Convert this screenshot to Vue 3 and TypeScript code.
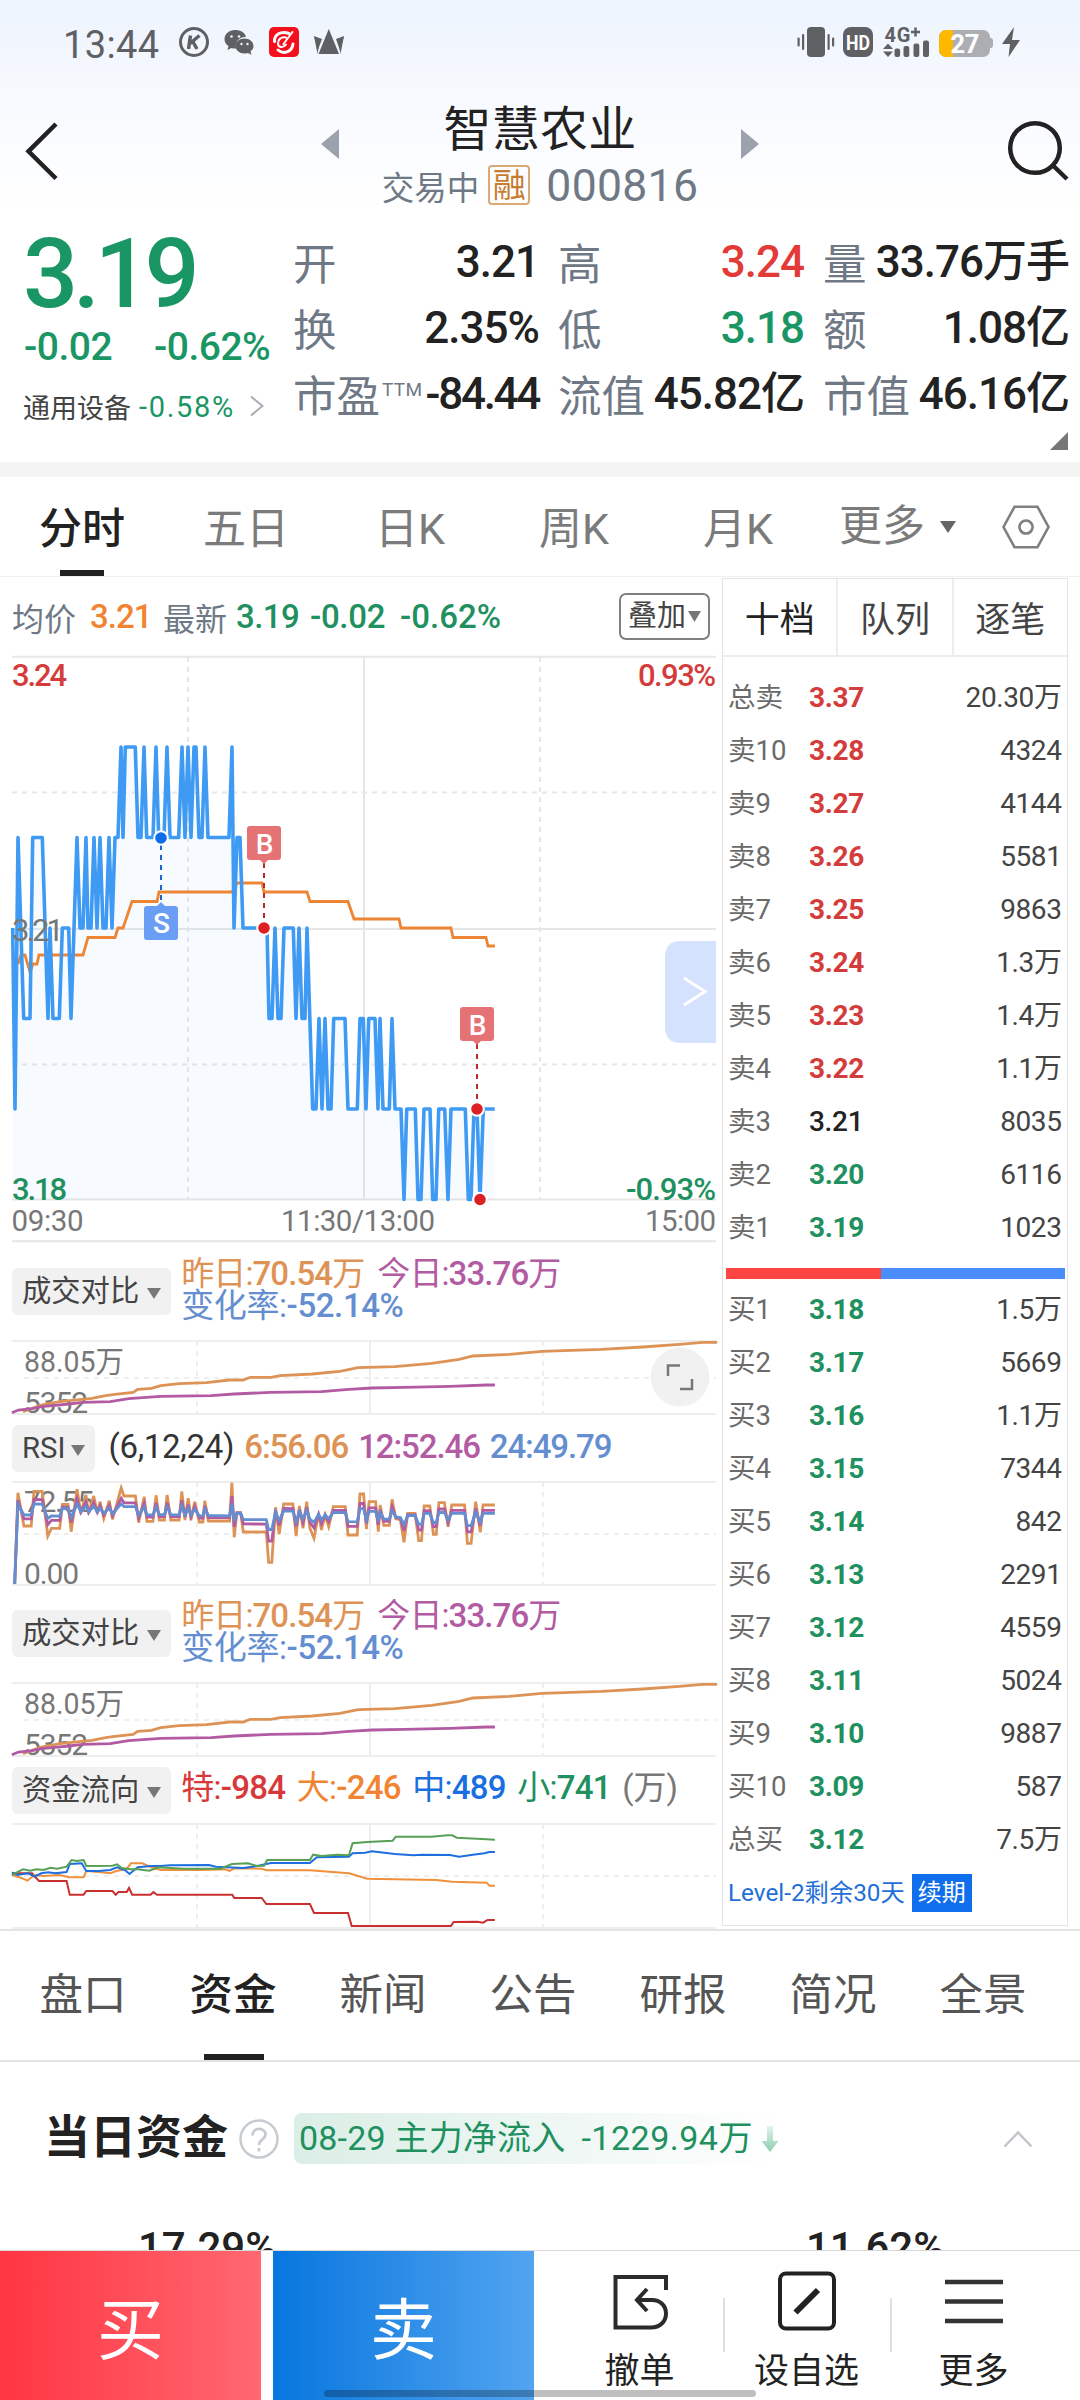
<script setup lang="ts">
type Pt = [number, number]

interface Quote { label: string; sup?: string; value: string; tone?: string }
interface Level { label: string; price: string; volume: string; tone: string }

const quotes: Quote[] = [
  { label: '开', value: '3.21' },
  { label: '高', value: '3.24', tone: 'up' },
  { label: '量', value: '33.76万手' },
  { label: '换', value: '2.35%' },
  { label: '低', value: '3.18', tone: 'down' },
  { label: '额', value: '1.08亿' },
  { label: '市盈', sup: 'TTM', value: '-84.44', tone: 'tight' },
  { label: '流值', value: '45.82亿' },
  { label: '市值', value: '46.16亿' },
]

const periods = ['分时', '五日', '日K', '周K', '月K']
const subTabs = ['盘口', '资金', '新闻', '公告', '研报', '简况', '全景']

const level = (label: string, price: string, volume: string, tone: string): Level => ({ label, price, volume, tone })
const sells: Level[] = [
  level('总卖', '3.37', '20.30万', 'red'),
  level('卖10', '3.28', '4324', 'red'),
  level('卖9', '3.27', '4144', 'red'),
  level('卖8', '3.26', '5581', 'red'),
  level('卖7', '3.25', '9863', 'red'),
  level('卖6', '3.24', '1.3万', 'red'),
  level('卖5', '3.23', '1.4万', 'red'),
  level('卖4', '3.22', '1.1万', 'red'),
  level('卖3', '3.21', '8035', 'flat'),
  level('卖2', '3.20', '6116', 'green'),
  level('卖1', '3.19', '1023', 'green'),
]
const buys: Level[] = [
  level('买1', '3.18', '1.5万', 'green'),
  level('买2', '3.17', '5669', 'green'),
  level('买3', '3.16', '1.1万', 'green'),
  level('买4', '3.15', '7344', 'green'),
  level('买5', '3.14', '842', 'green'),
  level('买6', '3.13', '2291', 'green'),
  level('买7', '3.12', '4559', 'green'),
  level('买8', '3.11', '5024', 'green'),
  level('买9', '3.10', '9887', 'green'),
  level('买10', '3.09', '587', 'green'),
  level('总买', '3.12', '7.5万', 'green'),
]

// Minute prices: [third-pixels from the left, ticks above 3.18]
const prices: Pt[] = [
  [38, 3], [45, 1], [54, 4], [71, 2], [90, 2], [98, 4], [127, 4], [144, 2], [150, 3], [159, 2], [178, 2], [187, 3], [206, 3], [213, 2],
  [231, 4], [240, 3], [249, 3], [258, 4], [264, 3], [273, 3], [282, 4], [291, 3], [300, 4], [309, 3], [318, 3], [327, 4], [336, 3], [345, 4],
  [354, 4], [363, 5], [369, 4], [376, 5], [406, 5], [414, 4], [423, 4], [432, 5], [440, 4], [459, 4], [468, 5], [476, 4], [492, 4], [501, 5],
  [510, 4], [536, 4], [546, 5], [555, 4], [564, 5], [573, 4], [582, 5], [588, 5], [597, 4], [606, 4], [615, 5], [624, 4], [687, 4], [696, 5],
  [702, 3], [711, 4], [720, 4], [729, 3], [801, 3], [807, 2], [816, 2], [825, 3], [834, 2], [843, 2], [852, 3], [880, 3], [888, 2], [897, 3],
  [906, 2], [915, 2], [921, 3], [938, 1], [948, 1], [957, 2], [966, 1], [975, 2], [984, 1], [993, 1], [1001, 2], [1035, 2], [1044, 1],
  [1072, 1], [1080, 2], [1090, 2], [1098, 1], [1106, 2], [1125, 2], [1134, 1], [1140, 2], [1149, 1], [1168, 1], [1176, 2], [1185, 1],
  [1203, 1], [1212, 0], [1220, 1], [1246, 1], [1254, 0], [1263, 0], [1272, 1], [1290, 1], [1298, 0], [1308, 0], [1316, 1], [1334, 1],
  [1344, 0], [1353, 1], [1396, 1], [1405, 0], [1413, 0], [1422, 1], [1431, 1], [1440, 0], [1450, 1], [1484, 1],
]
const pricePts = prices.map(([x, t]) => `${(x / 3).toFixed(1)},${(1199.5 - t * 90.5).toFixed(1)}`).join(' ')
const priceArea = `12.7,1199.5 ${pricePts} 494.7,1199.5`

const average =
  '18,964 21,955 25,955 30,972 33,964 37,964 39,955 83,955 88,937.5 115,937.5 118,928 123,928 132,901.5 157,901.5 159,892 232,892 237,883 262,883 264,892 307,892 310,901.5 348,901.5 354,919 399,919 401,928 451,928 453,937.5 486,937.5 488,946 495,946'

// Series of the lower panels share one horizontal scale.
const sx = 2.178
const line = (pts: Pt[], base: number) => pts.map(([x, y]) => `${(x / sx).toFixed(1)},${(base + y / 3).toFixed(1)}`).join(' ')

const yesterday = line([
  [50, 545], [60, 540], [90, 525], [130, 515], [200, 505], [230, 497], [250, 493], [290, 487], [300, 478], [330, 475], [350, 467], [390, 461],
  [450, 458], [500, 450], [530, 450], [545, 442], [590, 442], [610, 437], [680, 432], [740, 424], [780, 413], [860, 410], [940, 400],
  [1000, 388], [1030, 378], [1110, 373], [1180, 364], [1310, 358], [1400, 351], [1480, 343], [1530, 337], [1562, 337],
], 1230)
const today = line([
  [26, 548], [40, 540], [70, 536], [90, 530], [120, 526], [150, 522], [180, 517], [240, 515], [280, 506], [350, 499], [460, 497], [510, 492],
  [590, 487], [700, 485], [760, 478], [810, 474], [880, 472], [980, 469], [1060, 465], [1078, 465],
], 1230)

const rsi: Pt[] = [
  [32, 1062], [39, 788], [52, 888], [68, 888], [74, 784], [92, 784], [104, 918], [112, 895], [130, 895], [136, 823], [148, 823], [155, 905],
  [168, 778], [176, 850], [187, 795], [193, 850], [204, 798], [212, 850], [218, 815], [226, 865], [238, 812], [245, 868], [264, 774],
  [270, 798], [295, 798], [302, 878], [314, 800], [320, 874], [333, 874], [340, 796], [347, 870], [358, 870], [364, 795], [372, 870],
  [390, 870], [396, 784], [403, 870], [410, 805], [416, 870], [424, 815], [434, 876], [442, 876], [446, 812], [454, 873], [500, 873],
  [505, 758], [510, 922], [516, 848], [524, 848], [530, 906], [580, 906], [585, 997], [592, 997], [600, 832], [608, 912], [618, 822],
  [638, 822], [645, 918], [652, 828], [660, 895], [668, 815], [675, 895], [684, 925], [694, 850], [700, 900], [708, 855], [716, 890],
  [726, 830], [752, 830], [758, 915], [778, 915], [784, 792], [792, 792], [798, 897], [804, 815], [818, 815], [824, 905], [828, 825],
  [836, 886], [848, 886], [854, 808], [862, 866], [872, 870], [880, 937], [888, 850], [904, 850], [912, 932], [918, 932], [924, 828],
  [936, 828], [944, 913], [950, 913], [956, 818], [968, 818], [976, 890], [984, 825], [1012, 825], [1018, 940], [1026, 940], [1036, 815],
  [1046, 907], [1052, 825], [1078, 825],
]
const smooth = (k: number): Pt[] =>
  rsi.map(([x, y]): Pt => {
    if (y > 1050) return [x, y]
    const mean = 838 + Math.min(x / 1000, 1) * 24
    return [x, mean + (y - mean) * k]
  })
const rsi6 = line(rsi, 1230)
const rsi12 = line(smooth(0.56), 1230)
const rsi24 = line(smooth(0.32), 1230)

const flows = [
  { color: '#c9302f', pts: line([[26, 880], [70, 880], [76, 890], [85, 903], [145, 903], [152, 944], [182, 944], [188, 933], [245, 933], [252, 944], [258, 936], [276, 936], [281, 924], [288, 944], [328, 944], [334, 936], [342, 944], [506, 944], [510, 954], [570, 954], [580, 972], [675, 972], [684, 999], [758, 999], [766, 1038], [982, 1038], [988, 1026], [1040, 1025], [1052, 1028], [1062, 1020], [1078, 1020]], 1580) },
  { color: '#f0903c', pts: line([[26, 885], [45, 893], [60, 902], [75, 885], [95, 888], [130, 885], [150, 892], [182, 892], [188, 873], [215, 876], [240, 880], [255, 872], [275, 868], [285, 850], [310, 850], [330, 862], [350, 870], [440, 870], [490, 868], [500, 873], [510, 865], [570, 866], [580, 871], [675, 871], [760, 880], [800, 896], [860, 898], [950, 900], [985, 905], [1060, 908], [1066, 917], [1078, 917]], 1580) },
  { color: '#1d6fe0', pts: line([[26, 877], [38, 885], [50, 882], [62, 880], [75, 890], [90, 880], [105, 877], [120, 880], [145, 876], [152, 852], [178, 850], [188, 873], [215, 873], [240, 870], [255, 862], [272, 870], [282, 882], [300, 862], [330, 858], [350, 858], [370, 856], [455, 855], [470, 860], [530, 864], [560, 858], [590, 849], [675, 849], [690, 832], [760, 830], [768, 820], [795, 818], [810, 814], [860, 822], [900, 826], [920, 824], [980, 825], [1000, 830], [1030, 824], [1055, 820], [1066, 816], [1078, 816]], 1580) },
  { color: '#57a055', pts: line([[26, 885], [40, 875], [50, 868], [66, 872], [80, 868], [95, 870], [110, 863], [125, 866], [145, 860], [156, 840], [168, 843], [182, 840], [188, 858], [245, 857], [255, 853], [265, 864], [285, 868], [300, 868], [325, 872], [345, 862], [400, 866], [480, 866], [505, 852], [540, 850], [560, 858], [575, 857], [582, 840], [675, 840], [682, 824], [700, 828], [735, 824], [760, 826], [768, 790], [800, 786], [855, 782], [862, 770], [940, 770], [975, 766], [985, 766], [995, 773], [1050, 777], [1078, 779]], 1580) },
]
</script>

<template>
  <div class="screen">
    <header class="top">
      <svg class="status" width="1080" height="84" viewBox="0 0 1080 84">
        <text x="63" y="57.5" font-size="38" fill="#5f6063" textLength="96">13:44</text>
        <g fill="none" stroke="#5f6063" stroke-width="3">
          <circle cx="194" cy="42" r="13.5" />
          <path d="M190.500 35.500L188.500 49M199.500 35.500L190 43.500M192.800 41.500L197 49" stroke-width="3.500" />
        </g>
        <g fill="#5f6063">
          <path d="M235 30c-6 0-10.500 4-10.500 9 0 3 1.500 5.500 4 7l-1 4 4-2c1.500.5 3 .6 4.500.5-1.500-7 4-12 10-11.500-1-4.500-5.500-7-11-7z" />
          <path d="M244.500 38.500c-5 0-9 3.400-9 7.500s4 7.500 9 7.500c1.200 0 2.300-.1 3.300-.5l3.700 1.800-1-3.300c1.800-1.400 3-3.300 3-5.500 0-4.100-4-7.500-9-7.500z" />
          <path d="M328.800 29L339 54h-20.500zM314 36l8 3-4.200 11.500zM344 36l-8 3 4 11.500z" />
          <path d="M314 36l3.500 18 1.500-9zM344 36l-3.500 18-1.500-9z" />
        </g>
        <g fill="#f1f5fc"><circle cx="231.500" cy="36.500" r="1.300" /><circle cx="239" cy="36.500" r="1.300" /><circle cx="241.500" cy="44" r="1.200" /><circle cx="247.500" cy="44" r="1.200" /></g>
        <rect x="269" y="27" width="30" height="30" rx="5" fill="#f40f1c" />
        <g fill="none" stroke="#fff" stroke-linecap="round">
          <path d="M289 33.500c-8-3-15 1-14.500 8M278 50c5 4.500 14 2.500 15-6" stroke-width="3" />
          <path d="M286 37.500c-5-1-8 2-8 6s5 5 8 1M292.500 32l-9 12" stroke-width="2" />
        </g>
        <g fill="#5f6063">
          <rect x="807" y="27" width="18" height="30" rx="4" />
          <rect x="802" y="34" width="2.200" height="16" rx="1" /><rect x="797.500" y="37.500" width="2.200" height="9" rx="1" />
          <rect x="827.500" y="34" width="2.200" height="16" rx="1" /><rect x="832" y="37.500" width="2.200" height="9" rx="1" />
          <rect x="843" y="27" width="30" height="30" rx="8" />
          <text x="884.500" y="42" font-size="20" font-weight="700" textLength="26">4G</text>
          <path d="M911 32h9M915.500 27.500v9" stroke="#5f6063" stroke-width="2.500" />
          <path d="M888 43.500l5 5.500h-10zM888 57l5-5.500h-10z" />
          <rect x="894.500" y="48.500" width="5.600" height="8.500" rx="2" /><rect x="903.500" y="46" width="5.800" height="11" rx="2" />
          <rect x="913.500" y="43.500" width="5.800" height="13.500" rx="2" /><rect x="923" y="40.500" width="6" height="16.500" rx="2" />
          <path d="M1014 27l-12 17h8l-1.500 13L1020 40h-8z" />
        </g>
        <text x="846" y="49.500" font-size="20" font-weight="700" fill="#fff" textLength="24" lengthAdjust="spacingAndGlyphs">HD</text>
        <path d="M988 38h2.500q2.500 0 2.500 3v4q0 3-2.500 3H988z" fill="#acaeb3" />
        <rect x="939" y="30" width="51" height="27" rx="7" fill="#acaeb3" />
        <path d="M953 30h-7a7 7 0 0 0-7 7v13a7 7 0 0 0 7 7h7z" fill="#ffb800" />
        <text x="950.500" y="53" font-size="25.500" font-weight="700" fill="#fff" textLength="29">27</text>
      </svg>

      <div class="titlebar">
        <svg width="321" height="138" viewBox="0 84 321 138"><path d="M56 124L28.500 151.300L56 178.500" fill="none" stroke="#222" stroke-width="4.500" /></svg>
        <svg width="18" height="138" viewBox="321 84 18 138"><path d="M339 129v30l-18-15z" fill="#9aa3ad" /></svg>
        <div class="title">
          <h1>智慧农业</h1>
          <div class="subtitle"><span>交易中</span><b>融</b><i>000816</i></div>
        </div>
        <svg width="18" height="138" viewBox="741 84 18 138"><path d="M741 129v30l18-15z" fill="#9aa3ad" /></svg>
        <svg width="321" height="138" viewBox="759 84 321 138">
          <circle cx="1035" cy="148" r="24.800" fill="none" stroke="#222" stroke-width="4.500" /><path d="M1053 165.500L1067 179" stroke="#222" stroke-width="4.500" />
        </svg>
      </div>
    </header>

    <section class="quote">
      <div class="last">
        <div class="price">3.19</div>
        <div class="change"><span>-0.02</span><span>-0.62%</span></div>
        <div class="sector">
          <span>通用设备</span><em>-0.58%</em>
          <svg width="14" height="22" viewBox="0 0 14 22"><path d="M1 1.500L12.500 11L1 20.500" fill="none" stroke="#a7adb4" stroke-width="2" /></svg>
        </div>
      </div>
      <div class="grid">
        <div v-for="q in quotes" :key="q.label" class="cell">
          <span class="label">{{ q.label }}<sup v-if="q.sup">{{ q.sup }}</sup></span>
          <span class="value" :class="q.tone">{{ q.value }}</span>
        </div>
      </div>
      <svg class="fold" width="18" height="18"><path d="M18 0v18H0z" fill="#777" /></svg>
    </section>

    <nav class="periods">
      <span v-for="(p, i) in periods" :key="p" :class="{ active: i === 0 }">{{ p }}</span>
      <span class="more">更多<svg width="16" height="12"><path d="M0 0h16l-8 12z" fill="#666" /></svg></span>
      <svg width="48" height="44" viewBox="0 0 48 44"><path d="M12.500 1.800h23L46.500 22l-11 20.200h-23L1.500 22z M24 15.500a6.500 6.500 0 1 0 .01 0z" fill="none" stroke="#808080" stroke-width="2.600" /></svg>
    </nav>

    <main class="main">
      <div class="charts">
        <div class="info">
          <span class="grey">均价</span><span class="avg">3.21</span><span class="grey now">最新</span>
          <span class="fall a">3.19</span><span class="fall b">-0.02</span><span class="fall c">-0.62%</span>
          <button class="overlay">叠加<svg width="13" height="11"><path d="M0 0h13l-6.500 11z" fill="#777" /></svg></button>
        </div>

        <svg width="722" height="586" viewBox="0 656 722 586" class="plot">
          <g stroke="#e6e7e5" stroke-width="2" fill="none">
            <path d="M12 656.800H716M12 929H716M12 1199.500H716M364 657V1199" />
            <path d="M12 792.500H716M12 1064.500H716M188 657V1199M540 657V1199" stroke-dasharray="5 5" />
          </g>
          <polygon :points="priceArea" fill="#3d97f5" fill-opacity="0.045" />
          <polyline :points="average" fill="none" stroke="#ed8535" stroke-width="2.800" />
          <polyline :points="pricePts" fill="none" stroke="#3f9af4" stroke-width="3.600" stroke-linejoin="round" />
          <g font-size="31" font-weight="500">
            <text x="12" y="685.500" fill="#d43c3c" textLength="55">3.24</text>
            <text x="12" y="941" fill="#777" font-weight="400" textLength="52">3.21</text>
            <text x="12" y="1200" fill="#21905f" textLength="55">3.18</text>
            <text x="638" y="685.500" fill="#d43c3c" textLength="78">0.93%</text>
            <text x="626" y="1200" fill="#21905f" textLength="90">-0.93%</text>
          </g>
          <g font-size="29.500" fill="#777">
            <text x="11.500" y="1231" textLength="72">09:30</text><text x="281" y="1231" textLength="154">11:30/13:00</text><text x="645" y="1231" textLength="71">15:00</text>
          </g>
          <g stroke-width="2" stroke-dasharray="5 5"><path d="M161 845V905" stroke="#1a66cc" /><path d="M264 863V922M477 1044V1103" stroke="#b5282c" /></g>
          <g stroke="#fff" stroke-width="2">
            <circle cx="161" cy="838" r="6.800" fill="#0f6eec" /><circle cx="264" cy="928" r="6.800" fill="#dd2024" />
            <circle cx="477" cy="1109" r="6.800" fill="#dd2024" /><circle cx="480" cy="1199.500" r="6.800" fill="#dd2024" />
          </g>
          <path d="M147 906h10l4-4l4 4h10q3 0 3 3v28q0 3-3 3h-28q-3 0-3-3v-28q0-3 3-3z" fill="#6a9ef5" />
          <path d="M250 826h28q3 0 3 3v28q0 3-3 3h-10l-4 4l-4-4h-10q-3 0-3-3v-28q0-3 3-3z" fill="#e57376" />
          <path d="M463 1007h28q3 0 3 3v28q0 3-3 3h-10l-4 4l-4-4h-10q-3 0-3-3v-28q0-3 3-3z" fill="#e57376" />
          <g font-size="28" font-weight="500" fill="#fff" text-anchor="middle"><text x="161.500" y="933">S</text><text x="264.500" y="853.500">B</text><text x="477.500" y="1034.500">B</text></g>
          <path d="M716 941h-35q-16 0-16 16v70q0 16 16 16h35z" fill="#d4e2fe" />
          <path d="M684 978L705 991.500L684 1005" fill="none" stroke="#fff" stroke-width="3" />
          <path d="M12 1241.300H716" stroke="#e6e6e6" stroke-width="2" />
        </svg>

        <template v-for="n in 2" :key="n">
          <div class="legend volume" :class="{ second: n === 2 }">
            <button>成交对比<svg width="14" height="11"><path d="M0 0h14l-7 11z" fill="#777" /></svg></button>
            <div class="two">
              <div><span class="o">昨日:<b>70.54</b>万</span><span class="p">今日:<b>33.76</b>万</span></div>
              <div><span class="bl">变化率:<b>-52.14%</b></span></div>
            </div>
          </div>
          <svg width="722" height="76" viewBox="0 1340 722 76" class="plot">
            <g stroke="#eeeeee" stroke-width="2" fill="none"><path d="M12 1341H716M12 1414H716M370 1341V1414" /><path d="M24 1378H716M197 1341V1414M543 1341V1414" stroke-dasharray="5 5" /></g>
            <g font-size="30" fill="#777"><text x="24" y="1371.500" textLength="100" lengthAdjust="spacingAndGlyphs">88.05万</text><text x="24" y="1412.500" textLength="64">5352</text></g>
            <polyline :points="yesterday" fill="none" stroke="#dd9356" stroke-width="2.800" />
            <polyline :points="today" fill="none" stroke="#b35ba2" stroke-width="2.800" />
            <template v-if="n === 1">
              <circle cx="680" cy="1377" r="29.500" fill="#f0f0f0" fill-opacity="0.900" />
              <path d="M668 1376V1365.500H680M692 1379V1389H680" fill="none" stroke="#777" stroke-width="2.500" />
            </template>
          </svg>
          <template v-if="n === 1">
            <div class="legend rsi">
              <button>RSI<svg width="14" height="11"><path d="M0 0h14l-7 11z" fill="#777" /></svg></button>
              <span class="k">(6,12,24)</span><span class="o">6:56.06</span><span class="p">12:52.46</span><span class="bl">24:49.79</span>
            </div>
            <svg width="722" height="106" viewBox="0 1481 722 106" class="plot">
              <g stroke="#eeeeee" stroke-width="2" fill="none"><path d="M12 1482H716M12 1585H716M370 1482V1585" /><path d="M24 1534H716M197 1482V1585M543 1482V1585" stroke-dasharray="5 5" /></g>
              <g font-size="30" fill="#777"><text x="24" y="1512" textLength="70">72.55</text><text x="24" y="1583.500" textLength="55">0.00</text></g>
              <g fill="none" stroke-width="2.800"><polyline :points="rsi6" stroke="#dd9356" /><polyline :points="rsi12" stroke="#b35ba2" /><polyline :points="rsi24" stroke="#648ed0" /></g>
            </svg>
          </template>
        </template>

        <div class="legend flow">
          <button>资金流向<svg width="14" height="11"><path d="M0 0h14l-7 11z" fill="#777" /></svg></button>
          <span class="r">特:<b>-984</b></span><span class="or">大:<b>-246</b></span><span class="b2">中:<b>489</b></span><span class="g">小:<b>741</b></span><span class="u">(万)</span>
        </div>
        <svg width="722" height="106" viewBox="0 1823 722 106" class="plot">
          <g stroke="#eeeeee" stroke-width="2" fill="none"><path d="M12 1824H716M12 1928H716M370 1824V1928" /><path d="M24 1876H716M197 1824V1928M543 1824V1928" stroke-dasharray="5 5" /></g>
          <polyline v-for="f in flows" :key="f.color" :points="f.pts" fill="none" :stroke="f.color" stroke-width="2" />
        </svg>
      </div>

      <aside class="book">
        <div class="booktabs"><span class="on">十档</span><span>队列</span><span>逐笔</span></div>
        <div class="levels">
          <div v-for="l in sells" :key="l.label" class="level"><span>{{ l.label }}</span><b :class="l.tone">{{ l.price }}</b><i>{{ l.volume }}</i></div>
        </div>
        <div class="ratio"><span></span></div>
        <div class="levels">
          <div v-for="l in buys" :key="l.label" class="level"><span>{{ l.label }}</span><b :class="l.tone">{{ l.price }}</b><i>{{ l.volume }}</i></div>
        </div>
        <div class="renew"><span>Level-2剩余30天</span><button>续期</button></div>
      </aside>
    </main>

    <nav class="subtabs"><span v-for="(t, i) in subTabs" :key="t" :class="{ active: i === 1 }">{{ t }}</span></nav>

    <section class="funds">
      <div class="fundhead">
        <h2>当日资金</h2>
        <svg width="40" height="40" viewBox="0 0 40 40"><circle cx="20" cy="20" r="18.500" fill="none" stroke="#c6cbd1" stroke-width="2.500" /><path d="M13.500 16.500c0-9 13-8.500 13-1 0 5-6.500 5-6.500 10.500M20 29v3.500" fill="none" stroke="#c6cbd1" stroke-width="2.800" /></svg>
        <div class="pill"><span>08-29 主力净流入</span><span class="net">-1229.94万</span>
          <svg width="18" height="28" viewBox="0 0 18 28"><defs><linearGradient id="dn" x1="0" y1="0" x2="0" y2="1"><stop offset="0" stop-color="#e3f3ec" /><stop offset="1" stop-color="#8ccdb0" /></linearGradient></defs><path d="M6 1h6v15h5.500L9 27L.5 16H6z" fill="url(#dn)" /></svg>
        </div>
        <svg class="fold-up" width="30" height="18"><path d="M1.500 16.500L15 2.500L28.500 16.500" fill="none" stroke="#c2c6cb" stroke-width="2.500" /></svg>
      </div>
      <div class="shares"><span>17.29%</span><span>11.62%</span></div>
    </section>

    <footer class="bar">
      <button class="buy">买</button>
      <button class="sell">卖</button>
      <div class="actions">
        <div class="act">
          <svg width="60" height="64" viewBox="0 0 60 64"><path d="M56 21V8H5.500v50.500H41c9 0 15-6 15-14S50 31 42 31H28M37 20L27 31L37 42" fill="none" stroke="#2b2b2b" stroke-width="4" /></svg>
          <span>撤单</span>
        </div>
        <div class="act">
          <svg width="60" height="64" viewBox="0 0 60 64"><rect x="3" y="4.500" width="54" height="55" rx="6" fill="none" stroke="#222" stroke-width="4" /><path d="M18.500 43.500L41 21" stroke="#222" stroke-width="6" /></svg>
          <span>设自选</span>
        </div>
        <div class="act">
          <svg width="60" height="64" viewBox="0 0 60 64"><path d="M1 13H59M1 32.500H59M1 52H59" stroke="#333" stroke-width="4.500" /></svg>
          <span>更多</span>
        </div>
      </div>
      <div class="home"></div>
    </footer>
  </div>
</template>

<style>
body { background: #fff; }
</style>

<style scoped>
.screen { width: 1080px; height: 2400px; overflow: hidden; background: #fff; color: #222; font-family: Roboto, "Noto Sans CJK SC", sans-serif; display: flex; flex-direction: column; }
svg { display: block; flex: none; }
button { border: 0; padding: 0; margin: 0; background: none; font: inherit; color: inherit; display: flex; align-items: center; justify-content: center; }
h1, h2 { margin: 0; }
i, em { font-style: normal; }
.screen > * { flex: none; }

.top { height: 222px; background: linear-gradient(#edf4fe 0, #f6f9fe 85px, #fff 212px); }
.titlebar { display: grid; grid-template-columns: 321px 18px 402px 18px 321px; height: 138px; }
.title { padding-top: 16px; display: flex; flex-direction: column; align-items: center; }
h1 { font-size: 48px; line-height: 60px; font-weight: 400; letter-spacing: 0.3px; }
.subtitle { display: flex; align-items: center; height: 56px; margin-top: -3px; color: #6f7985; }
.subtitle span { font-size: 32.500px; }
.subtitle b { width: 38px; height: 36px; border: 2px solid #dba877; border-radius: 4px; color: #c77c30; font-size: 33px; font-weight: 400; line-height: 38px; text-align: center; margin: 0 16px 0 9px; }
.subtitle i { font-size: 44.500px; letter-spacing: 0.300px; padding-top: 2px; }

.quote { position: relative; display: flex; height: 240px; border-bottom: 15px solid #f4f4f4; }
.last { width: 293px; color: #1a9665; }
.price { height: 102px; line-height: 104px; padding-left: 23px; font-size: 97px; font-weight: 500; letter-spacing: -5.200px; }
.change { display: flex; height: 44px; line-height: 46px; padding-left: 24px; font-size: 39px; font-weight: 500; letter-spacing: -0.500px; }
.change span:first-child { width: 130px; }
.sector { display: flex; align-items: center; height: 76px; padding-left: 23px; font-size: 27px; }
.sector span { color: #444; }
.sector em { margin-left: 8px; padding-top: 2px; font-size: 29px; letter-spacing: 1.700px; }
.sector svg { margin-left: 15px; }
.grid { display: grid; grid-template-columns: repeat(3, 246px); column-gap: 19px; grid-auto-rows: 66px; padding-top: 8px; height: 232px; box-sizing: border-box; }
.cell { display: flex; justify-content: space-between; white-space: nowrap; line-height: 66px; }
.label { position: relative; top: 3px; color: #6f7985; font-size: 43.500px; }
.label sup { position: absolute; left: 89px; top: 14px; font-size: 19px; line-height: 22px; letter-spacing: 0.300px; }
.value { position: relative; top: -1px; font-size: 44px; font-weight: 500; letter-spacing: -1px; }
.tight { letter-spacing: -2.300px; }
.up { color: #e33a38; }
.down { color: #1a9665; }
.fold { position: absolute; right: 12px; bottom: 12px; }

.periods { display: flex; align-items: center; height: 99px; border-bottom: 1px solid #f0f0f0; color: #7b7b7b; font-size: 43px; }
.periods span { position: relative; width: 164px; height: 99px; text-align: center; line-height: 105px; }
.periods .active { color: #222; font-weight: 500; }
.periods .active::after { content: ""; position: absolute; left: 60px; bottom: 0; width: 44px; height: 6px; background: #222; }
.periods .more { width: 182px; display: flex; align-items: center; padding-left: 19px; box-sizing: border-box; }
.periods .more svg { margin-left: 15px; }

.main { display: flex; height: 1352px; border-bottom: 2px solid #e4e4e4; }
.charts { width: 722px; }
.info { display: flex; align-items: center; height: 79px; padding: 0 12px; font-size: 33px; font-weight: 500; letter-spacing: -0.600px; }
.grey { color: #6f7985; font-size: 32px; font-weight: 400; letter-spacing: 0; width: 64px; }
.avg { color: #f08432; width: 87px; padding-left: 14px; box-sizing: border-box; letter-spacing: -1px; }
.fall { color: #21905f; }
.fall.a { width: 83px; padding-left: 9px; box-sizing: border-box; }
.fall.b { width: 90px; letter-spacing: -0.300px; }
.fall.c { letter-spacing: 0; }
.overlay { margin-left: auto; width: 91px; height: 47px; line-height: 43px; box-sizing: border-box; border: 2px solid #808080; border-radius: 7px; font-size: 29px; font-weight: 400; letter-spacing: 0; color: #444; gap: 2px; }
.plot { overflow: visible; }

.legend { display: flex; align-items: center; padding-left: 12px; font-size: 33px; white-space: nowrap; letter-spacing: -0.900px; }
.legend b { font-weight: 500; }
.legend button { height: 47px; line-height: 47px; padding: 0 10px; border-radius: 6px; background: #f1f1f1; color: #444; font-size: 29.300px; letter-spacing: 0; gap: 8px; }
.legend button svg { position: relative; top: 2px; }
.volume { height: 98px; align-items: flex-start; box-sizing: border-box; padding-top: 26px; }
.volume.second { height: 95px; padding-top: 23px; }
.two { margin: -10px 0 0 10px; line-height: 32px; }
.two div { display: flex; gap: 13px; }
.two .bl { letter-spacing: -0.400px; }
.o { color: #dd9356; }
.p { color: #b35ba2; }
.bl { color: #648ed0; }
.rsi { height: 65px; }
.rsi button { gap: 6px; }
.rsi span { position: relative; top: -2px; font-weight: 500; margin-left: 10px; letter-spacing: -1.100px; }
.rsi .k { color: #333; margin-left: 13px; font-weight: 400; letter-spacing: -0.300px; }
.flow { height: 65px; line-height: 65px; }
.flow span { position: relative; top: -3px; margin-left: 11.500px; letter-spacing: -0.750px; }
.flow button + span { margin-left: 10px; }
.r { color: #d8383a; }
.or { color: #f08432; }
.b2 { color: #1a6fe0; }
.g { color: #21905f; }
.flow .u { color: #777; letter-spacing: 0; }

.book { width: 344px; height: 1346px; margin-top: 1px; border: 1.500px solid #e3e4e3; display: flex; flex-direction: column; }
.booktabs { display: flex; height: 78px; border-bottom: 2px solid #ededed; box-sizing: border-box; color: #444; font-size: 35px; }
.booktabs span { flex: 1; height: 76px; text-align: center; line-height: 83px; }
.booktabs span + span { border-left: 2px solid #ededed; }
.booktabs .on { color: #222; }
.levels { padding: 14px 5.500px 0 5px; }
.level { display: flex; align-items: center; height: 53px; line-height: 53px; font-size: 28px; letter-spacing: -0.500px; }
.level span { width: 81px; color: #6a6a6a; font-size: 27.500px; letter-spacing: 0; }
.level b { font-weight: 700; letter-spacing: -0.300px; }
.level i { margin-left: auto; color: #444; letter-spacing: -0.400px; }
.red { color: #d43c3c; }
.green { color: #21905f; }
.level .flat { color: #222; font-weight: 500; }
.ratio { margin: 14px 2px 0 3px; height: 11px; background: #4b8dfc; }
.ratio span { display: block; width: 155px; height: 11px; background: #fd4443; }
.ratio + .levels { padding-top: 4px; }
.renew { display: flex; align-items: center; padding: 8px 0 0 5px; font-size: 24.300px; line-height: 38px; color: #1f6fd8; }
.renew button { width: 60px; height: 38px; margin-left: 7px; background: #0f6eec; color: #fff; font-size: 24px; }

.subtabs { display: flex; height: 129px; padding: 0 22px 0 8px; color: #555; font-size: 43.500px; border-bottom: 2px solid #e2e2e2; }
.subtabs span { position: relative; flex: none; width: 150px; height: 129px; text-align: center; line-height: 130px; }
.subtabs .active { color: #222; font-weight: 500; }
.subtabs .active::after { content: ""; position: absolute; left: 46px; bottom: 0; width: 60px; height: 6px; background: #222; }

.funds { height: 188px; overflow: hidden; }
.fundhead { display: flex; align-items: center; height: 51px; margin-top: 51px; padding: 0 47px 0 44px; }
h2 { font-size: 46px; line-height: 51px; font-weight: 700; margin-right: 11px; padding-bottom: 2px; }
.pill { display: flex; align-items: center; height: 51px; line-height: 51px; margin-left: 15px; padding-left: 5px; border-radius: 8px; background: linear-gradient(90deg, #dbeee6, #fff); color: #21905f; font-size: 34px; white-space: nowrap; letter-spacing: 0.200px; }
.pill .net { margin-left: 16px; letter-spacing: 0.500px; }
.pill svg { margin-left: 8px; }
.fold-up { margin-left: auto; }
.shares { display: flex; padding-left: 138px; margin-top: 59px; font-size: 42px; font-weight: 500; line-height: 50px; }
.shares span { width: 668px; flex: none; }

.bar { position: relative; display: flex; height: 149px; border-top: 1px solid #d8d8d8; background: #fff; }
.buy, .sell { width: 261px; color: #fff; font-size: 67px; line-height: 80px; padding-top: 10px; box-sizing: border-box; }
.buy { background: linear-gradient(90deg, #ff3542, #ff6871); margin-right: 12px; }
.sell { background: linear-gradient(90deg, #0776de, #52a4f0); }
.actions { display: flex; padding-left: 22px; }
.act { position: relative; width: 167px; display: flex; flex-direction: column; align-items: center; padding-top: 18px; font-size: 35px; }
.act span { line-height: 50px; margin-top: 14px; }
.act + .act::before { content: ""; position: absolute; left: 0; top: 47px; width: 2px; height: 54px; background: #e0e0e0; }
.home { position: absolute; left: 324px; top: 139px; width: 432px; height: 7px; border-radius: 4px; background: rgba(0, 0, 0, 0.250); }
</style>
